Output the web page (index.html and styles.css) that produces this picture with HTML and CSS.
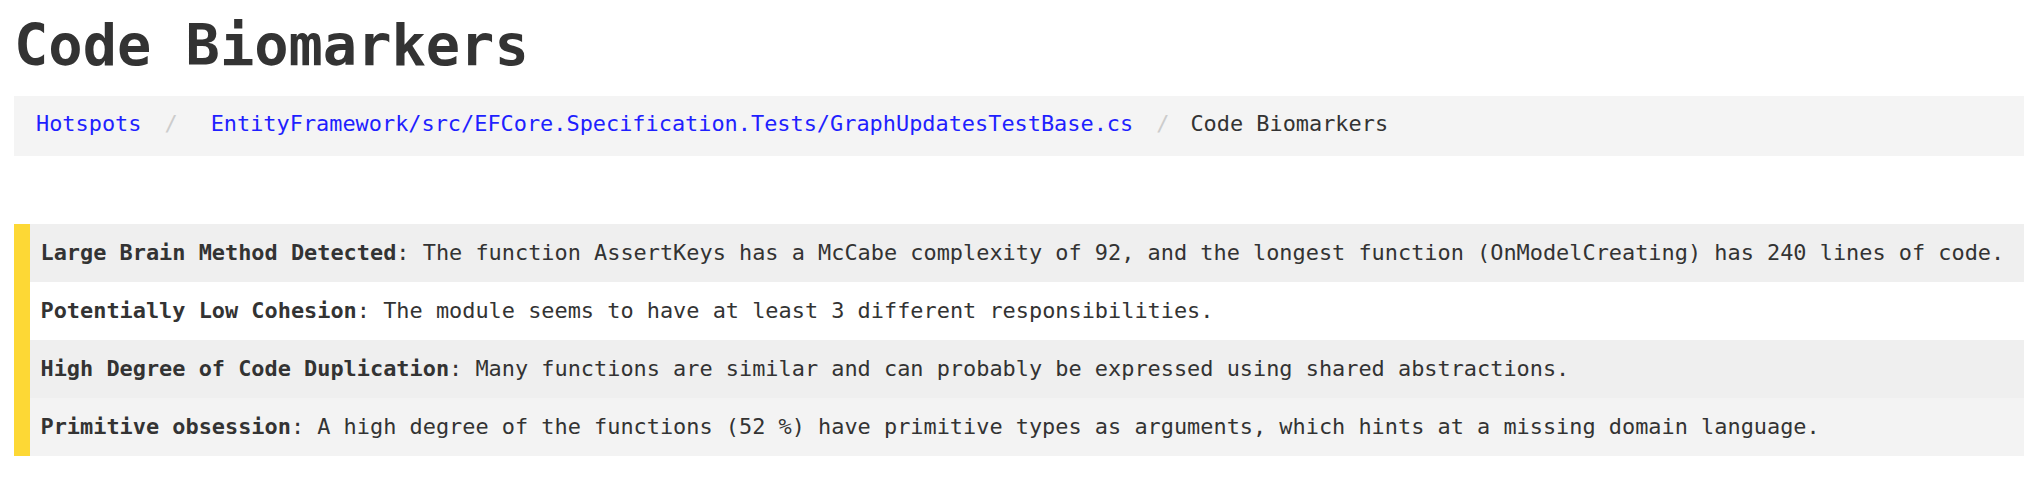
FILE: index.html
```html
<!DOCTYPE html>
<html>
<head>
<meta charset="UTF-8">
<title>Code Biomarkers</title>
<link rel="stylesheet" href="styles.css">
</head>
<body>

<h1 class="page-title">Code Biomarkers</h1>

<!--Breadcrumb-->
<ol class="breadcrumb">
  <li><a href="#">Hotspots</a></li>
  <li class="crumb-path"><a href="#">EntityFramework/src/EFCore.Specification.Tests/GraphUpdatesTestBase.cs</a></li>
  <li class="active">Code Biomarkers</li>
</ol>

<!--Biomarkers-->
<ul class="biomarkers">
  <li class="marker"><b>Large Brain Method Detected</b>: The function AssertKeys has a McCabe complexity of 92, and the longest function (OnModelCreating) has 240 lines of code.</li>
  <li class="marker"><b>Potentially Low Cohesion</b>: The module seems to have at least 3 different responsibilities.</li>
  <li class="marker"><b>High Degree of Code Duplication</b>: Many functions are similar and can probably be expressed using shared abstractions.</li>
  <li class="marker"><b>Primitive obsession</b>: A high degree of the functions (52 %) have primitive types as arguments, which hints at a missing domain language.</li>
</ul>

</body>
</html>
```

FILE: styles.css
```css
* {
  box-sizing: border-box;
}

body {
  margin: 0 0 0 14px;
  background: #fff;
  color: #333;
  font-family: "DejaVu Sans Mono", "Liberation Mono", monospace;
  font-size: 21.9px;
  white-space: nowrap;
}

.page-title {
  margin: 11px 0 17px;
  font-size: 57px;
  line-height: 68px;
  font-weight: bold;
  color: #333;
}

.breadcrumb {
  display: flex;
  margin: 0;
  padding: 15px 0 19px 22px;
  line-height: 26px;
  list-style: none;
  background: #f4f4f4;
}

.breadcrumb a {
  color: #1f1fff;
  text-decoration: none;
}

.breadcrumb li + li::before {
  content: "/";
  padding: 0 21px 0 23px;
  color: #ccc;
}

.crumb-path a {
  margin-left: 12px;
}

.biomarkers {
  margin: 68px 0 0;
  padding: 0;
  list-style: none;
  border-left: 16px solid #fdd835;
}

.marker {
  height: 58px;
  padding: 15.5px 0 0 10.5px;
  line-height: 26px;
}

.marker:nth-child(odd) {
  background: #efefef;
}

.marker:last-child {
  background: #f3f3f3;
}
```
